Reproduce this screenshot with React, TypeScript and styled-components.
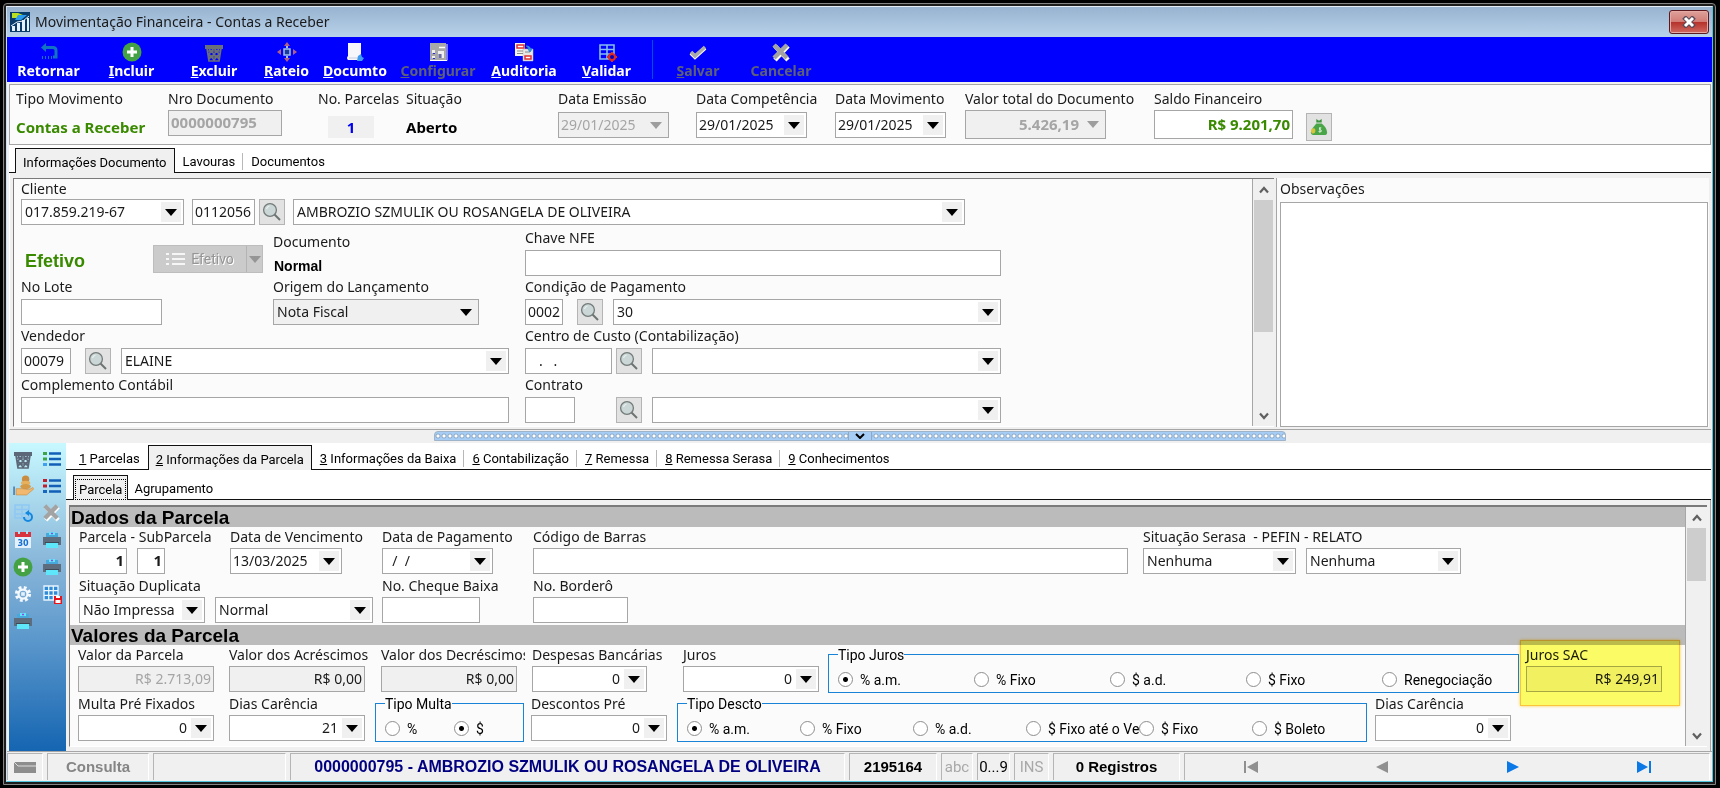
import React, { useId } from "react";
import styled, { createGlobalStyle, css } from "styled-components";

const UI = '"Noto Sans", "Open Sans", sans-serif';
const CLASSIC = 'Roboto, "Liberation Sans", sans-serif';
const HEAVY = '"Liberation Sans", sans-serif';
const GRAY = "#a6a6a6";

const Global = createGlobalStyle`
  *, *::before, *::after { box-sizing: border-box; }
  body { margin: 0; background: #000; color: #1a1a1a; font-family: ${UI}; font-size: 14px; }
  button, input, select, textarea { font: inherit; color: inherit; margin: 0; }
  button { padding: 0; border: 0; background: none; cursor: default; }
  svg { display: block; }
`;

/* ---------- window ---------- */
const Page = styled.div`padding: 3px 4px 3px 3px; min-width: 1720px;`;
const Frame = styled.div`
  border: 1px solid #858585;
  border-radius: 4px 4px 0 0;
  padding: 2px;
  background: #1c1c1c;
`;
const Window = styled.main`
  border: 1px solid;
  border-color: #e4ebf2 #4fc4dd #4fc4dd #cfe0f2;
  background: #f0f0f0;
`;
const TitleBar = styled.header`
  height: 30px;
  display: flex;
  align-items: center;
  gap: 5px;
  padding: 0 3px;
  background: linear-gradient(#97b3cf, #b9d2eb);
`;
const Title = styled.h1`margin: 0; flex: 1; font-size: 14px; font-weight: 400; line-height: 20px;`;
const CloseButton = styled.button`
  width: 40px;
  height: 24px;
  display: grid;
  place-items: center;
  border: 1px solid #5a1a20;
  border-radius: 3px;
  box-shadow: inset 0 0 0 1px #e6aaa4;
  background: linear-gradient(#dfa19b 0%, #d17d76 48%, #b5302a 50%, #cf6a62 100%);
`;

/* ---------- toolbar ---------- */
const Toolbar = styled.nav`height: 45px; display: flex; background: #0000fe;`;
const Tool = styled.button<{ $w: number }>`
  width: ${(p) => p.$w}px;
  display: flex;
  flex-direction: column;
  align-items: center;
  padding-top: 5px;
  color: #fff;
  font-weight: 700;
  line-height: 18px;
  &:disabled { color: #5d6078; }
  svg { width: 20px; height: 20px; }
`;
const ToolSeparator = styled.span`width: 1px; margin: 3px 3px; background: #0050d8;`;

/* ---------- fields ---------- */
const Cell = styled.div<{ $w?: number; $gap?: number }>`
  display: flex;
  flex-direction: column;
  align-items: flex-start;
  gap: ${(p) => p.$gap ?? 1}px;
  flex: none;
  width: ${(p) => (p.$w ? p.$w + "px" : "auto")};
`;
const labelText = css<{ $clip?: boolean }>`
  line-height: 20px;
  white-space: pre;
  max-width: ${(p) => (p.$clip ? "144px" : "none")};
  overflow: ${(p) => (p.$clip ? "hidden" : "visible")};
`;
const Label = styled.label<{ $clip?: boolean }>`${labelText}`;
const Caption = styled.span<{ $clip?: boolean }>`${labelText}`;
const Inline = styled.div<{ $gap?: number }>`display: flex; align-items: center; gap: ${(p) => p.$gap ?? 10}px;`;

interface BoxProps { $w: number; $h?: number; $off?: boolean }
const Box = styled.span<BoxProps>`
  width: ${(p) => p.$w}px;
  height: ${(p) => p.$h ?? 26}px;
  display: flex;
  border: 1px solid ${GRAY};
  background: ${(p) => (p.$off ? "#f0f0f0" : "#fff")};
  flex: none;
`;
const TextInput = styled.input<{ $bold?: boolean; $right?: boolean; $color?: string }>`
  flex: 1;
  min-width: 0;
  width: 100%;
  border: 0;
  outline: 0;
  background: none;
  padding: 0 2px 2px;
  font-size: ${(p) => (p.$bold ? 15 : 14)}px;
  font-weight: ${(p) => (p.$bold ? 700 : 400)};
  text-align: ${(p) => (p.$right ? "right" : "left")};
  color: ${(p) => p.$color ?? "#1a1a1a"};
`;
const Drop = styled.button<{ $off?: boolean }>`
  width: 20px;
  margin: 2px;
  display: grid;
  place-items: center;
  background: #f0f0f0;
  color: ${(p) => (p.$off ? "#9d9d9d" : "#000")};
`;
const SelectBox = styled(Box)`
  display: grid;
  grid-template: 1fr / 1fr;
  > * { grid-area: 1 / 1; }
`;
const NativeSelect = styled.select`
  appearance: none;
  border: 0;
  outline: 0;
  background: none;
  padding: 0 24px 1px 3px;
  min-width: 0;
`;
const DropMark = styled.span`
  justify-self: end;
  width: 20px;
  margin: 2px;
  display: grid;
  place-items: center;
  background: #f0f0f0;
  color: #000;
  pointer-events: none;
`;
const SquareButton = styled.button`
  width: 26px;
  height: 26px;
  flex: none;
  display: grid;
  place-items: center;
  border: 1px solid #b4b4b4;
  background: #e2e2e2;
`;

const Triangle = () => (
  <svg width="12" height="7" viewBox="0 0 12 7" aria-hidden="true"><path d="M0 0h12L6 7z" fill="currentColor" /></svg>
);

interface FieldProps {
  label?: string; name?: string; w: number; cell?: number; value?: string; h?: number; gap?: number;
  drop?: boolean; off?: boolean; dim?: boolean; bold?: boolean; right?: boolean; color?: string; clip?: boolean;
}
function Control(p: FieldProps & { id?: string }) {
  return (
    <Box $w={p.w} $h={p.h} $off={p.off}>
      <TextInput id={p.id} aria-label={p.id ? undefined : p.name} defaultValue={p.value} $bold={p.bold} $right={p.right}
        $color={p.dim ? "#a5a5a5" : p.color} disabled={p.dim} />
      {p.drop && <Drop $off={p.dim} disabled={p.dim} aria-label={"Abrir " + (p.label ?? p.name)}><Triangle /></Drop>}
    </Box>
  );
}
function Field(p: FieldProps) {
  const id = useId();
  return (
    <Cell $w={p.cell} $gap={p.gap}>
      <Label htmlFor={id} $clip={p.clip}>{p.label}</Label>
      <Control {...p} id={id} />
    </Cell>
  );
}
function Combo({ id, name, w, value, off }: { id?: string; name?: string; w: number; value?: string; off?: boolean }) {
  return (
    <SelectBox $w={w} $off={off}>
      <NativeSelect id={id} aria-label={id ? undefined : name}><option>{value ?? ""}</option></NativeSelect>
      <DropMark><Triangle /></DropMark>
    </SelectBox>
  );
}
const Search = ({ name }: { name: string }) => (
  <SquareButton aria-label={"Pesquisar " + name}>
    <svg width="20" height="20" viewBox="0 0 20 20" aria-hidden="true">
      <path d="M12.500 12.500l5.500 5.500" stroke="#6c7472" strokeWidth="2" />
      <circle cx="8" cy="8" r="6.4" fill="#cbd6d6" stroke="#727b79" strokeWidth="1.3" />
      <path d="M4.500 7a4 4 0 0 1 3-3" fill="none" stroke="#e8f0f0" strokeWidth="1.200" />
    </svg>
  </SquareButton>
);

/* ---------- summary strip ---------- */
const Body = styled.div`padding: 2px 1px 0 2px;`;
const Summary = styled.section`
  display: flex;
  height: 61px;
  padding: 4px 6px 0;
  border: 1px solid ${GRAY};
  background: #fbfbfb;
`;
const Strong = styled.output<{ $color?: string; $fill?: boolean }>`
  font-weight: 700;
  font-size: 15px;
  line-height: 22px;
  margin-top: 6px;
  color: ${(p) => p.$color ?? "#000"};
  ${(p) => p.$fill && css`background: #f0f0f0; width: 46px; margin-left: 10px; text-align: center;`}
`;
const MoneyButton = styled(SquareButton)`height: 28px; margin-top: 24px;`;

/* ---------- tabs ---------- */
const TabBar = styled.div<{ $inset: number; $top: number }>`
  display: flex;
  align-items: flex-end;
  padding: ${(p) => p.$top}px 0 0 ${(p) => p.$inset}px;
  background: #fff;
  border-bottom: 1px solid #111;
`;
const Tab = styled.button<{ $active?: boolean; $rule?: boolean; $snug?: boolean }>`
  height: 24px;
  padding: 2px ${(p) => (p.$snug ? 5 : 7)}px 0;
  font-family: ${CLASSIC};
  font-size: 13px;
  color: #000;
  display: flex;
  align-items: center;
  white-space: pre;
  border: 1px solid transparent;
  border-bottom: 0;
  ${(p) => p.$active && css`background: #f0f0f0; border-color: #111; margin-bottom: -1px; height: 25px;`}
  ${(p) => p.$rule && css`
    &::after { content: ""; width: 1px; height: 17px; background: #b8b8b8; margin: 0 -8px 0 7px; }
  `}
`;
const Focus = styled.span`outline: 1px dotted #000; padding: 0 3px; margin: 0 -3px; line-height: 19px;`;

/* ---------- upper form ---------- */
const Upper = styled.section`
  display: flex;
  padding: 5px 2px 2px 3px;
  border-left: 1px solid #fff;
  border-bottom: 1px solid ${GRAY};
`;
const Sunken = styled.div<{ $b: number }>`
  flex: 1;
  display: flex;
  border-top: ${(p) => p.$b}px solid #7a7a7a;
  border-left: 1px solid #7a7a7a;
  border-bottom: 1px solid #fff;
  background: #fbfbfb;
  min-width: 0;
`;
const UpperGrid = styled.div`
  flex: 1;
  display: grid;
  grid-template-columns: 252px 252px 1fr;
  grid-auto-rows: 49px;
  padding: 0 0 2px 7px;
`;
const Wide = styled.div<{ $span: number }>`grid-column: span ${(p) => p.$span};`;
const EffectiveRow = styled.div`
  display: flex;
  justify-content: space-between;
  align-items: flex-end;
  padding: 0 10px 4px 4px;
`;
const Effective = styled.strong`color: #3a8a00; font: 700 18px/24px ${HEAVY};`;
const SplitButton = styled.div`display: flex; height: 28px; background: #cbcbcb; border: 1px solid #bdbdbd; color: #959595;`;
const SplitMain = styled.button`width: 92px; display: flex; align-items: center; justify-content: center; gap: 6px; font-family: ${CLASSIC}; text-shadow: 1px 1px #fff; color: #959595;`;
const SplitDrop = styled.button`width: 16px; border-left: 1px solid #b4b4b4; display: grid; place-items: center; color: #959595;`;
const NormalText = styled.strong`font: 700 14px/20px ${HEAVY}; color: #000; padding-left: 1px;`;
const DocumentCell = styled.div`display: flex; flex-direction: column; gap: 4px; padding-top: 4px;`;

const Notes = styled.div`
  width: 433px;
  margin-left: 2px;
  padding: 1px 0 0 3px;
  border-left: 1px solid ${GRAY};
  display: flex;
  flex-direction: column;
  background: #fbfbfb;
`;
const NotesArea = styled.textarea`flex: 1; margin: 3px 1px 0 0; resize: none; border: 1px solid ${GRAY}; background: #fff; outline: 0;`;

/* ---------- scroll bar ---------- */
const Track = styled.div`width: 22px; flex: none; background: #f0f0f0; border-left: 1px solid ${GRAY}; display: flex; flex-direction: column; padding: 0 1px;`;
const ScrollArrow = styled.button`height: 21px; display: grid; place-items: center;`;
const Thumb = styled.div<{ $h: number }>`height: ${(p) => p.$h}px; background: #cdcdcd; margin-bottom: auto;`;
const Scroll = ({ thumb }: { thumb: number }) => (
  <Track>
    <ScrollArrow aria-label="Rolar para cima"><svg width="10" height="8" viewBox="0 0 10 8"><path d="M1 6.500l4-4.500 4 4.500" fill="none" stroke="#606060" strokeWidth="2.200" /></svg></ScrollArrow>
    <Thumb $h={thumb} />
    <ScrollArrow aria-label="Rolar para baixo"><svg width="10" height="8" viewBox="0 0 10 8"><path d="M1 1.500l4 4.500 4-4.500" fill="none" stroke="#606060" strokeWidth="2.200" /></svg></ScrollArrow>
  </Track>
);

/* ---------- splitter ---------- */
const Splitter = styled.div`height: 13px; display: flex; justify-content: center; padding: 1px 0 2px; background: #f0f0f0;`;
const Grip = styled.button`
  width: 852px;
  display: flex;
  justify-content: center;
  border: 1px solid #9fb4c8;
  border-radius: 4px 4px 0 0;
  background: radial-gradient(circle at 3px 4px, #fff 1px, #8fa9c4 2px, #a5cdf5 3px) 0 0 / 6px 8px #a5cdf5;
`;
const GripMark = styled.span`width: 24px; height: 8px; display: grid; place-items: center; background: #a5cdf5; border: solid #8fa9c4; border-width: 0 1px;`;

/* ---------- lower area ---------- */
const Lower = styled.div`display: flex; background: #fff;`;
const Side = styled.nav`
  width: 57px;
  flex: none;
  display: grid;
  grid-template-columns: 28px 29px;
  grid-auto-rows: 27px;
  align-content: start;
  padding-top: 2px;
  background: linear-gradient(#c8f8ff, #86b4d8 40%, #5f9acd 62%, #1565b2);
`;
const SideButton = styled.button`display: grid; place-items: center;`;
const LowerMain = styled.div`flex: 1; min-width: 0; display: flex; flex-direction: column;`;
const Inset = styled.div`padding: 5px 3px 4px 3px; background: #f0f0f0; border-right: 1px solid ${GRAY}; display: flex; flex: 1;`;
const FormArea = styled.div`flex: 1; min-width: 0; padding-bottom: 3px;`;
const Section = styled.h2`
  margin: 0;
  height: 20px;
  background: #bbb;
  color: #000;
  font: 700 19px/22px ${HEAVY};
  padding-left: 1px;
`;
const Row = styled.div<{ $pad?: number }>`display: flex; height: 49px; padding-left: ${(p) => p.$pad ?? 8}px;`;
const Group = styled.fieldset<{ $w: number; $ml: number; $mr: number }>`
  flex: none;
  width: ${(p) => p.$w}px;
  height: 48px;
  margin: 0 ${(p) => p.$mr}px 0 ${(p) => p.$ml}px;
  padding: 0 0 0 9px;
  border: 1px solid #1883d7;
  font-family: ${CLASSIC};
  color: #000;
`;
const Legend = styled.legend`padding: 0; line-height: 20px; height: 18px;`;
const Options = styled.div<{ $cols: string }>`display: grid; grid-template-columns: ${(p) => p.$cols}; height: 28px; padding-top: 5px; align-items: center;`;
const Option = styled.label`display: flex; align-items: center; gap: 7px; white-space: nowrap; line-height: 20px;`;
const Radio = styled.input`
  appearance: none;
  flex: none;
  width: 15px;
  height: 15px;
  border: 1px solid #8e8e8e;
  border-radius: 50%;
  background: #fff;
  &:checked { background: radial-gradient(circle, #000 0 2px, #fff 3px); }
`;
const Sac = styled.div`position: relative; padding-left: 6px;`;
const Highlight = styled.div`
  position: absolute;
  z-index: 1;
  left: 0;
  top: -5px;
  width: 160px;
  height: 66px;
  background: #ffff66;
  border: 1px solid #ffc83c;
  box-shadow: 0 0 3px #ffd24d;
  mix-blend-mode: multiply;
  pointer-events: none;
`;

function RadioGroup({ legend, w, ml, mr, cols, options, checked }: { legend: string; w: number; ml: number; mr: number; cols: string; options: string[]; checked: number }) {
  const name = useId();
  return (
    <Group $w={w} $ml={ml} $mr={mr}>
      <Legend>{legend}</Legend>
      <Options $cols={cols}>
        {options.map((o, i) => (
          <Option key={o}><Radio type="radio" name={name} defaultChecked={i === checked} />{o}</Option>
        ))}
      </Options>
    </Group>
  );
}

/* ---------- status bar ---------- */
const Status = styled.footer`display: flex; gap: 4px; padding: 1px 2px 1px 0; height: 30px; border-top: 1px solid ${GRAY}; background: #f0f0f0;`;
const StatusCell = styled.div<{ $w?: number; $color?: string; $light?: boolean; $big?: boolean }>`
  ${(p) => (p.$w ? css`width: ${p.$w}px; flex: none;` : css`flex: 1;`)}
  display: flex;
  align-items: center;
  justify-content: center;
  border: solid;
  border-width: 1px 1px 0 1px;
  border-color: #b5b5b5 #fff #fff #b5b5b5;
  font-family: ${(p) => (p.$light ? CLASSIC : HEAVY)};
  font-weight: ${(p) => (p.$light ? 400 : 700)};
  font-size: ${(p) => (p.$big ? 16 : 15)}px;
  line-height: 20px;
  white-space: pre;
  color: ${(p) => p.$color ?? "#000"};
`;
const NavButton = styled.button`flex: 1; height: 24px; display: grid; place-items: center; color: #0a78e6; &:disabled { color: #909090; }`;

/* ---------- icons ---------- */
const Svg = ({ children, s = 20 }: { children: React.ReactNode; s?: number }) => (
  <svg width={s} height={s} viewBox="0 0 20 20" aria-hidden="true">{children}</svg>
);
const BackIcon = () => <Svg><path d="M7 1v9L2 5.500z" fill="#1273c0" /><path d="M6 5.500h8q3 0 3 3V15h-3" fill="none" stroke="#1273c0" strokeWidth="3" /><path d="M3 15.500h12" stroke="#1273c0" strokeWidth="3" strokeDasharray="1 2" /></Svg>;
const PlusIcon = () => <Svg><circle cx="10" cy="10" r="9.500" fill="#45a244" /><path d="M10 5v10M5 10h10" stroke="#fff" strokeWidth="3" /></Svg>;
const TrashIcon = ({ c = "#6a6f78" }: { c?: string }) => (
  <Svg><path d="M1 3h18v4H1z" fill={c} /><path d="M3 6l2 13h10l2-13M5 7l10 10M15 7L5 17M10 6l5 6-5 6-5-6zM4 9h12M5 15h10" fill="none" stroke={c} strokeWidth="1.700" /></Svg>
);
const MoveIcon = () => <Svg><g fill="#b06080"><path d="M10 0l3 4H7zM10 20l3-4H7zM0 10l4-3v6zM20 10l-4-3v6z" /></g><path d="M7 7h6v6H7z" fill="#1a3aa0" stroke="#9fc0e8" strokeWidth="1.500" /><path d="M10 4v2M10 14v2" stroke="#9fc0e8" strokeWidth="2" /></Svg>;
const DocIcon = () => <Svg><path d="M3 1h13v17H3q-2-2 0-4z" fill="#f6f6fb" /><path d="M4 16h10" stroke="#c8cce0" /><path d="M12 19l1-5 3-2 1 3 2 1-2 3z" fill="#3d9cf0" /></Svg>;
const ConfigIcon = () => <Svg><path d="M2 1h16v18H2z" fill="#a8a8a8" /><path d="M2 18.500h17V2" fill="none" stroke="#fff" /><path d="M4 8h3v3H4zM4 14h3v2H4zM10 9h6v7h-2v-4h-4z" fill="#f0f0f0" /><path d="M11 5.500h6" stroke="#fff" strokeWidth="1.500" /><path d="M5 11.500h2M5 16.500h2M12 12v4" stroke="#2a2ae0" /></Svg>;
const AuditIcon = () => <Svg><path d="M1 1h10v13H1z" fill="#f4f4f4" /><path d="M9 7h10v12H9z" fill="#e6e6e6" stroke="#bbb" strokeWidth=".5" /><rect x="3" y="3" width="7" height="3" fill="#fff" stroke="#e03030" strokeWidth="1.500" /><rect x="11" y="14" width="6" height="3" fill="#fff" stroke="#e03030" strokeWidth="1.500" /><path d="M3 9h6M3 11.500h6M11 10h5" stroke="#888" /><path d="M12 4q5 0 4 4m-2-1l2 3 2-3z" fill="#2e8fd8" stroke="#2e8fd8" /></Svg>;
const ValidateIcon = () => <Svg><path d="M3 3h14v14H3zM3 7.500h14M3 12h14M10 3v14" fill="none" stroke="#86bdf2" strokeWidth="1.600" /><circle cx="15" cy="15" r="3" fill="#0000c0" stroke="#e02b20" strokeWidth="2" /><path d="M15 10v2M15 18v2M10 15h2M18 15h2" stroke="#e02b20" strokeWidth="2" /></Svg>;
const CheckIcon = () => <Svg><path d="M3 11l4 4L17 6" fill="none" stroke="#fff" strokeWidth="4" /><path d="M3 10l4 4L17 5" fill="none" stroke="#aaa" strokeWidth="3.500" /></Svg>;
const CrossIcon = ({ s }: { s?: number }) => <Svg s={s}><path d="M4 4l13 14M17 4L4 18" stroke="#fff" strokeWidth="4.500" /><path d="M3 3l13 13M16 3L3 16" stroke="#a3a3a3" strokeWidth="4.500" /></Svg>;
const ListIcon = ({ a, b }: { a: string; b: string }) => <Svg><path d="M7 4.500h12M7 10h12M7 15.500h12" stroke="#125fb8" strokeWidth="2.500" /><path d="M1 3h4v3H1z" fill={a} /><path d="M1 8.500h4v3H1z" fill={a} /><path d="M1 14h4v3H1z" fill={b} /></Svg>;
const HandIcon = () => <Svg s={21}><circle cx="12" cy="4" r="3.500" fill="#c98c40" /><ellipse cx="12" cy="7.500" rx="4.500" ry="2" fill="#e7b05c" /><ellipse cx="12" cy="11" rx="5" ry="2.500" fill="#d59a48" /><path d="M3 13h6l6 1 4-2q2 1 0 2l-6 5H3z" fill="#f0b870" stroke="#c98c40" strokeWidth=".6" /><path d="M1 11v8" stroke="#4a7aa8" strokeWidth="1.500" /></Svg>;
const RefreshGridIcon = () => <Svg><path d="M2 2h14v13H2zM2 6.500h14M2 11h14M9 2v13" fill="none" stroke="#8fc8f4" strokeWidth="1.500" /><path d="M11 14a4 4 0 1 0 4-4" fill="none" stroke="#1387e0" strokeWidth="2" /><path d="M16 7v6l-4-3z" fill="#1387e0" /></Svg>;
const CalendarIcon = () => <Svg><path d="M2 4h16v14H2z" fill="#e4f0fc" /><path d="M2 2h16v5H2z" fill="#d8333c" /><path d="M6 1v3M14 1v3" stroke="#a6e0f4" strokeWidth="2" /><text x="10" y="16" fontSize="8" fontWeight="700" textAnchor="middle" fill="#1670d0" fontFamily="DejaVu Sans">30</text></Svg>;
const PrinterIcon = () => <Svg><path d="M4 3h12v5H4z" fill="#48a8dc" /><path d="M7 3.500h6" stroke="#62e4fa" strokeWidth="3" /><path d="M9 3.500h2" stroke="#a040e0" strokeWidth="1.500" /><path d="M1 7h18v8H1z" fill="#5e6d7e" /><path d="M4 13h12v5H4z" fill="#5ee6fa" /><path d="M3 12.500h14" stroke="#3d4a5a" /></Svg>;
const GearIcon = () => <Svg s={18}><circle cx="10" cy="10" r="7" fill="none" stroke="#f2f8fe" strokeWidth="4" strokeDasharray="3 2.500" /><circle cx="10" cy="10" r="5" fill="none" stroke="#f2f8fe" strokeWidth="2.500" /><path d="M8 8h4v4H8z" fill="#e8f2fc" /></Svg>;
const SaveGridIcon = () => <Svg><path d="M2 2h14v14H2zM2 6.700h14M2 11.300h14M6.700 2v14M11.300 2v14" fill="#2f8ad8" stroke="#e9f5ff" strokeWidth="1.300" /><path d="M12 12h8v8h-8z" fill="#e8141c" /><path d="M14 12h4v2h-4zM13.500 16h5v3h-5z" fill="#fff" /></Svg>;
const MoneyIcon = () => <Svg s={18}><path d="M7 1l3 2 3-2v4H7z" fill="#3f9440" /><path d="M7 6h6q6 5 6 10 0 3-3 3H5q-4 0-4-3Q2 11 7 6z" fill="#4aa548" /><path d="M11 10v6M12.500 11q-3 0-2 1.500 3 1 2 2.500-2 1-3 0" fill="none" stroke="#e4f4e0" strokeWidth="1" /><path d="M2 12q4-2 4 2t-4 3q-2-3 0-5z" fill="#d8c43a" /></Svg>;
const AppIcon = () => <Svg><path d="M0 0h20v20H0z" fill="#083d6b" /><path d="M2 1h6l5 2-4 3H2z" fill="#b8e020" /><path d="M8 3h9l-6 5H5z" fill="#2a9cf0" /><path d="M2 14h3v5H2zM7 11h3v8H7zM12 8h3v11h-3zM17 6h2v13h-2z" fill="#e8f2fa" /><path d="M1 14l6-4 6-1 6-5" fill="none" stroke="#e8f2fa" /></Svg>;

const tools: [string, string, number, React.ReactNode, boolean?][] = [
  ["", "Retornar", 83, <BackIcon />],
  ["I", "ncluir", 83, <PlusIcon />],
  ["E", "xcluir", 82, <TrashIcon />],
  ["R", "ateio", 63, <MoveIcon />],
  ["D", "ocumto", 74, <DocIcon />],
  ["C", "onfigurar", 92, <ConfigIcon />, true],
  ["A", "uditoria", 80, <AuditIcon />],
  ["V", "alidar", 85, <ValidateIcon />],
];
const tools2: typeof tools = [
  ["S", "alvar", 84, <CheckIcon />, true],
  ["", "Cancelar", 82, <CrossIcon />, true],
];
const renderTool = ([u, t, w, icon, off]: (typeof tools)[number]) => (
  <Tool key={t} $w={w} disabled={off}>{icon}<span>{u && <u>{u}</u>}{t}</span></Tool>
);

const sideItems: [string, React.ReactNode][] = [
  ["Excluir parcela", <TrashIcon c="#5c6878" />],
  ["Marcar parcelas", <ListIcon a="#3fa347" b="#3da0f0" />],
  ["Receber", <HandIcon />],
  ["Desmarcar parcelas", <ListIcon a="#c0202c" b="#1766c0" />],
  ["Atualizar", <RefreshGridIcon />],
  ["Cancelar parcela", <CrossIcon s={19} />],
  ["Calendário", <CalendarIcon />],
  ["Imprimir boleto", <PrinterIcon />],
  ["Incluir parcela", <PlusIcon />],
  ["Imprimir recibo", <PrinterIcon />],
  ["Opções", <GearIcon />],
  ["Salvar grade", <SaveGridIcon />],
  ["Imprimir", <PrinterIcon />],
];

const parcelTabs: [string, string, boolean, boolean][] = [
  ["1", " Parcelas", false, false],
  ["2", " Informações da Parcela", true, false],
  ["3", " Informações da Baixa", false, true],
  ["6", " Contabilização", false, true],
  ["7", " Remessa", false, true],
  ["8", " Remessa Serasa", false, true],
  ["9", " Conhecimentos", false, false],
];

export default function App() {
  const ids = useId();
  return (
    <Page>
      <Global />
      <Frame>
        <Window>
          <TitleBar>
            <AppIcon />
            <Title>Movimentação Financeira - Contas a Receber</Title>
            <CloseButton aria-label="Fechar">
              <svg width="14" height="12" viewBox="0 0 14 12"><path d="M2 1l10 10M12 1L2 11" stroke="#5b4a58" strokeWidth="5" /><path d="M3 2l8 8M11 2l-8 8" stroke="#fff" strokeWidth="3" /></svg>
            </CloseButton>
          </TitleBar>

          <Toolbar>
            {tools.map(renderTool)}
            <ToolSeparator />
            {tools2.map(renderTool)}
          </Toolbar>

          <Body>
            <Summary>
              <Cell $w={152}><Caption>Tipo Movimento</Caption><Strong $color="#3a8a00">Contas a Receber</Strong></Cell>
              <Field label="Nro Documento" w={114} cell={150} value="0000000795" bold dim off />
              <Cell $w={88}><Caption>No. Parcelas</Caption><Strong $color="#0000f0" $fill>1</Strong></Cell>
              <Cell $w={152}><Caption>Situação</Caption><Strong>Aberto</Strong></Cell>
              <Field label="Data Emissão" w={111} cell={138} gap={3} value="29/01/2025" drop dim off />
              <Field label="Data Competência" w={111} cell={139} gap={3} value="29/01/2025" drop />
              <Field label="Data Movimento" w={111} cell={130} gap={3} value="29/01/2025" drop />
              <Field label="Valor total do Documento" w={141} h={29} cell={189} value="5.426,19" drop dim off bold right />
              <Field label="Saldo Financeiro" w={139} h={29} cell={152} value="R$ 9.201,70" bold right color="#3a8a00" />
              <MoneyButton aria-label="Saldo financeiro detalhado"><MoneyIcon /></MoneyButton>
            </Summary>

            <TabBar $inset={6} $top={3}>
              <Tab $active>Informações Documento</Tab>
              <Tab $rule>Lavouras</Tab>
              <Tab>Documentos</Tab>
            </TabBar>

            <Upper>
              <Sunken $b={1}>
                <UpperGrid>
                  <Wide $span={3}>
                    <Label htmlFor={ids + "cli"}>Cliente</Label>
                    <Inline $gap={8}>
                      <Combo id={ids + "cli"} w={163} value="017.859.219-67" />
                      <Inline $gap={4}><Control name="Código do cliente" w={63} value="0112056" /><Search name="cliente" /></Inline>
                      <Combo name="Nome do cliente" w={672} value="AMBROZIO SZMULIK OU ROSANGELA DE OLIVEIRA" />
                    </Inline>
                  </Wide>

                  <EffectiveRow>
                    <Effective>Efetivo</Effective>
                    <SplitButton>
                      <SplitMain disabled>
                        <svg width="19" height="14" viewBox="0 0 19 14" aria-hidden="true"><path d="M0 2h3M6 2h13M0 7h3M6 7h13M0 12h3M6 12h13" stroke="#f6f6f6" strokeWidth="2" /></svg>
                        Efetivo
                      </SplitMain>
                      <SplitDrop disabled aria-label="Abrir Efetivo"><Triangle /></SplitDrop>
                    </SplitButton>
                  </EffectiveRow>
                  <DocumentCell><Caption>Documento</Caption><NormalText>Normal</NormalText></DocumentCell>
                  <Field label="Chave NFE" w={476} gap={2} />

                  <Field label="No Lote" w={141} gap={2} />
                  <Cell $gap={2}><Label htmlFor={ids + "ori"}>Origem do Lançamento</Label><Combo id={ids + "ori"} w={206} value="Nota Fiscal" off /></Cell>
                  <Cell $gap={2}>
                    <Label htmlFor={ids + "con"}>Condição de Pagamento</Label>
                    <Inline>
                      <Inline $gap={14}><Control id={ids + "con"} w={38} value="0002" /><Search name="condição" /></Inline>
                      <Combo name="Condição" w={388} value="30" />
                    </Inline>
                  </Cell>

                  <Wide $span={2}>
                    <Cell $gap={2}>
                      <Label htmlFor={ids + "ven"}>Vendedor</Label>
                      <Inline>
                        <Inline $gap={14}><Control id={ids + "ven"} w={50} value="00079" /><Search name="vendedor" /></Inline>
                        <Combo name="Nome do vendedor" w={388} value="ELAINE" />
                      </Inline>
                    </Cell>
                  </Wide>
                  <Cell $gap={2}>
                    <Label htmlFor={ids + "cen"}>Centro de Custo (Contabilização)</Label>
                    <Inline>
                      <Inline $gap={4}><Control id={ids + "cen"} w={87} value="   .   ." /><Search name="centro de custo" /></Inline>
                      <Combo name="Centro de custo" w={349} />
                    </Inline>
                  </Cell>

                  <Wide $span={2}><Field label="Complemento Contábil" w={488} gap={2} /></Wide>
                  <Cell $gap={2}>
                    <Label htmlFor={ids + "ctr"}>Contrato</Label>
                    <Inline>
                      <Inline $gap={41}><Control id={ids + "ctr"} w={50} /><Search name="contrato" /></Inline>
                      <Combo name="Contrato" w={349} />
                    </Inline>
                  </Cell>
                </UpperGrid>
                <Scroll thumb={132} />
              </Sunken>
              <Notes>
                <Label htmlFor={ids + "obs"}>Observações</Label>
                <NotesArea id={ids + "obs"} />
              </Notes>
            </Upper>

            <Splitter>
              <Grip aria-label="Recolher painel">
                <GripMark><svg width="10" height="6" viewBox="0 0 10 6"><path d="M1 1l4 4 4-4" fill="none" stroke="#000" strokeWidth="2" /></svg></GripMark>
              </Grip>
            </Splitter>

            <Lower>
              <Side>{sideItems.map(([n, icon]) => <SideButton key={n} aria-label={n}>{icon}</SideButton>)}</Side>
              <LowerMain>
                <TabBar $inset={5} $top={2}>
                  {parcelTabs.map(([k, t, active, rule]) => <Tab key={k} $active={active} $rule={rule}><u>{k}</u>{t}</Tab>)}
                </TabBar>
                <TabBar $inset={7} $top={5}>
                  <Tab $active $snug><Focus>Parcela</Focus></Tab>
                  <Tab $snug>Agrupamento</Tab>
                </TabBar>
                <Inset>
                  <Sunken $b={2}>
                    <FormArea>
                      <Section>Dados da Parcela</Section>
                      <Row $pad={9}>
                        <Cell $w={151}>
                          <Label htmlFor={ids + "par"}>Parcela - SubParcela</Label>
                          <Inline><Control id={ids + "par"} w={48} value="1" bold right /><Control name="SubParcela" w={28} value="1" bold right /></Inline>
                        </Cell>
                        <Field label="Data de Vencimento" w={112} cell={152} value="13/03/2025" drop />
                        <Field label="Data de Pagamento" w={111} cell={151} value="  /  /" drop />
                        <Field label="Código de Barras" w={595} cell={610} />
                        <Cell>
                          <Label htmlFor={ids + "ser"}>{"Situação Serasa  - PEFIN - RELATO"}</Label>
                          <Inline><Combo id={ids + "ser"} w={153} value="Nenhuma" /><Combo name="Relato" w={155} value="Nenhuma" /></Inline>
                        </Cell>
                      </Row>
                      <Row $pad={9}>
                        <Cell $w={303}>
                          <Label htmlFor={ids + "dup"}>Situação Duplicata</Label>
                          <Inline><Combo id={ids + "dup"} w={126} value="Não Impressa" /><Combo name="Tipo de duplicata" w={158} value="Normal" /></Inline>
                        </Cell>
                        <Field label="No. Cheque Baixa" w={98} cell={151} />
                        <Field label="No. Borderô" w={95} />
                      </Row>
                      <Section>Valores da Parcela</Section>
                      <Row>
                        <Field label="Valor da Parcela" w={136} cell={151} value="R$ 2.713,09" dim off right />
                        <Field label="Valor dos Acréscimos" w={136} cell={152} value="R$ 0,00" off right />
                        <Field label="Valor dos Decréscimos" w={136} cell={151} value="R$ 0,00" off right clip />
                        <Field label="Despesas Bancárias" w={115} cell={151} value="0" drop right />
                        <Field label="Juros" w={136} cell={136} value="0" drop right />
                        <RadioGroup legend="Tipo Juros" w={690} ml={9} mr={1} cols="repeat(5, 136px)" checked={0} options={["% a.m.", "% Fixo", "$ a.d.", "$ Fixo", "Renegociação"]} />
                        <Sac>
                          <Field label="Juros SAC" w={136} value="R$ 249,91" right off />
                          <Highlight />
                        </Sac>
                      </Row>
                      <Row>
                        <Field label="Multa Pré Fixados" w={136} cell={151} value="0" drop right />
                        <Field label="Dias Carência" w={136} cell={136} value="21" drop right />
                        <RadioGroup legend="Tipo Multa" w={149} ml={10} mr={7} cols="69px 1fr" checked={1} options={["%", "$"]} />
                        <Field label="Descontos Pré" w={136} cell={136} value="0" drop right />
                        <RadioGroup legend="Tipo Descto" w={690} ml={10} mr={8} cols="repeat(6, 113px)" checked={0} options={["% a.m.", "% Fixo", "% a.d.", "$ Fixo até o Ve", "$ Fixo", "$ Boleto"]} />
                        <Field label="Dias Carência" w={136} value="0" drop right />
                      </Row>
                    </FormArea>
                    <Scroll thumb={53} />
                  </Sunken>
                </Inset>
              </LowerMain>
            </Lower>
          </Body>

          <Status>
            <StatusCell $w={36}>
              <svg width="22" height="11" viewBox="0 0 22 11" aria-hidden="true"><path d="M0 0h22v11H0z" fill="#8d8d8d" /><path d="M0 0l4 4h18" fill="none" stroke="#ddd" /></svg>
            </StatusCell>
            <StatusCell $w={102} $color="#858585">Consulta</StatusCell>
            <StatusCell $w={133} />
            <StatusCell $w={555} $big $color="#000080">0000000795 - AMBROZIO SZMULIK OU ROSANGELA DE OLIVEIRA</StatusCell>
            <StatusCell $w={88}>2195164</StatusCell>
            <StatusCell $w={32} $light $color="#a8a8a8">abc</StatusCell>
            <StatusCell $w={33} $light>0...9</StatusCell>
            <StatusCell $w={35} $light $color="#a8a8a8">INS</StatusCell>
            <StatusCell $w={127}>0 Registros</StatusCell>
            <StatusCell>
              <NavButton disabled aria-label="Primeiro"><svg width="16" height="12" viewBox="0 0 16 12"><path d="M1 0h2v12H1zM15 0v12L4 6z" fill="currentColor" /></svg></NavButton>
              <NavButton disabled aria-label="Anterior"><svg width="12" height="12" viewBox="0 0 12 12"><path d="M12 0v12L0 6z" fill="currentColor" /></svg></NavButton>
              <NavButton aria-label="Próximo"><svg width="12" height="12" viewBox="0 0 12 12"><path d="M0 0v12l12-6z" fill="currentColor" /></svg></NavButton>
              <NavButton aria-label="Último"><svg width="16" height="12" viewBox="0 0 16 12"><path d="M13 0h2v12h-2zM1 0v12l11-6z" fill="currentColor" /></svg></NavButton>
            </StatusCell>
          </Status>
        </Window>
      </Frame>
    </Page>
  );
}
